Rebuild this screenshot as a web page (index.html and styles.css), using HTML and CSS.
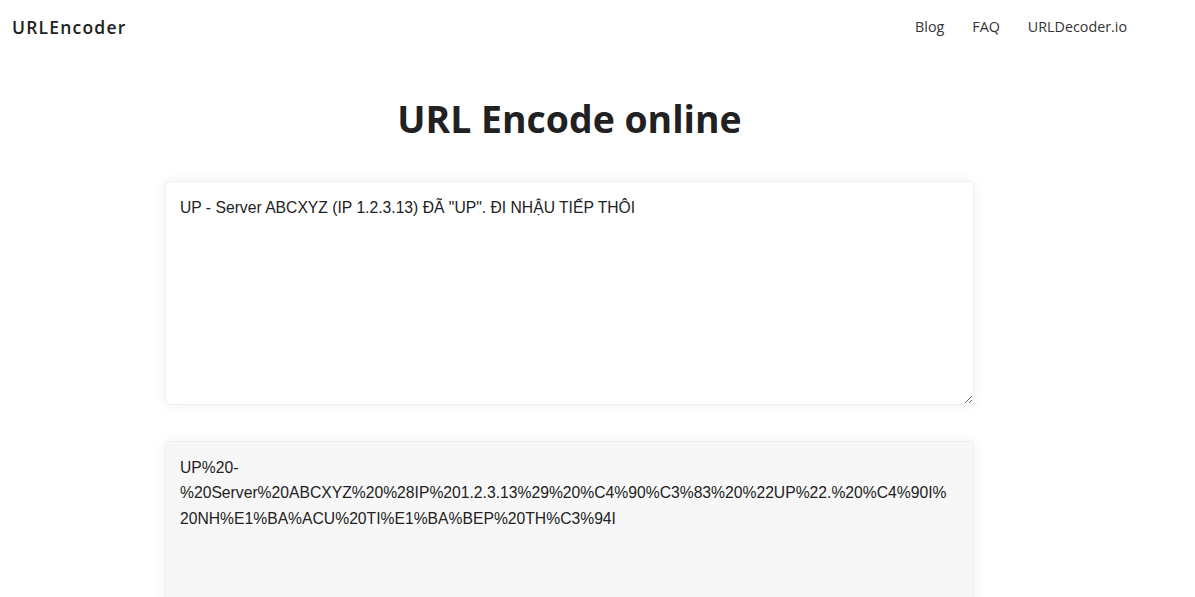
FILE: index.html
```html
<!DOCTYPE html>
<html>
<head>
  <title>URL Encode online</title>
  <link rel="stylesheet" href="styles.css">
</head>
<body>
  <nav class="navbar">
    <a class="brand" href="#">URLEncoder</a>
    <div class="nav-links">
      <a href="#">Blog</a>
      <a href="#">FAQ</a>
      <a href="#">URLDecoder.io</a>
    </div>
  </nav>

  <main class="main">
    <h1 class="title">URL Encode online</h1>
    <textarea class="box box-input" id="input">UP - Server ABCXYZ (IP 1.2.3.13) ĐÃ "UP". ĐI NHẬU TIẾP THÔI</textarea>
    <textarea class="box box-output" id="output" readonly>UP%20-%20Server%20ABCXYZ%20%28IP%201.2.3.13%29%20%C4%90%C3%83%20%22UP%22.%20%C4%90I%20NH%E1%BA%ACU%20TI%E1%BA%BEP%20TH%C3%94I</textarea>
  </main>
</body>
</html>
```

FILE: styles.css
```css
body {
  margin: 0;
  font-family: "Open Sans", sans-serif;
  color: #212121;
  background-color: #fff;
}

.navbar {
  display: flex;
  align-items: center;
  justify-content: space-between;
  height: 53px;
  padding: 0 68px 0 12px;
}

.brand {
  font-size: 17.5px;
  font-weight: 600;
  letter-spacing: 1.2px;
  color: #212121;
  text-decoration: none;
}

.nav-links {
  display: flex;
  gap: 28px;
}

.nav-links a {
  font-size: 14.3px;
  color: #333;
  text-decoration: none;
}

.main {
  width: 809px;
  margin-left: 165px;
}

.title {
  font-size: 37.4px;
  font-weight: 700;
  text-align: center;
  margin: 44px 0 39px;
  line-height: 1.2;
}

.box {
  display: block;
  box-sizing: border-box;
  width: 100%;
  padding: 13px 22px 13px 14px;
  border: 1px solid #efefef;
  border-radius: 4px;
  box-shadow: 0 0 14px rgba(0, 0, 0, 0.06);
  font-family: "Liberation Sans", Arial, sans-serif;
  font-size: 15.7px;
  line-height: 25.5px;
  color: #222;
  outline: none;
}

.box-input {
  height: 224px;
  background-color: #fff;
  margin-bottom: 36px;
}

.box-output {
  height: 224px;
  background-color: #f7f7f7;
  resize: none;
}
```
